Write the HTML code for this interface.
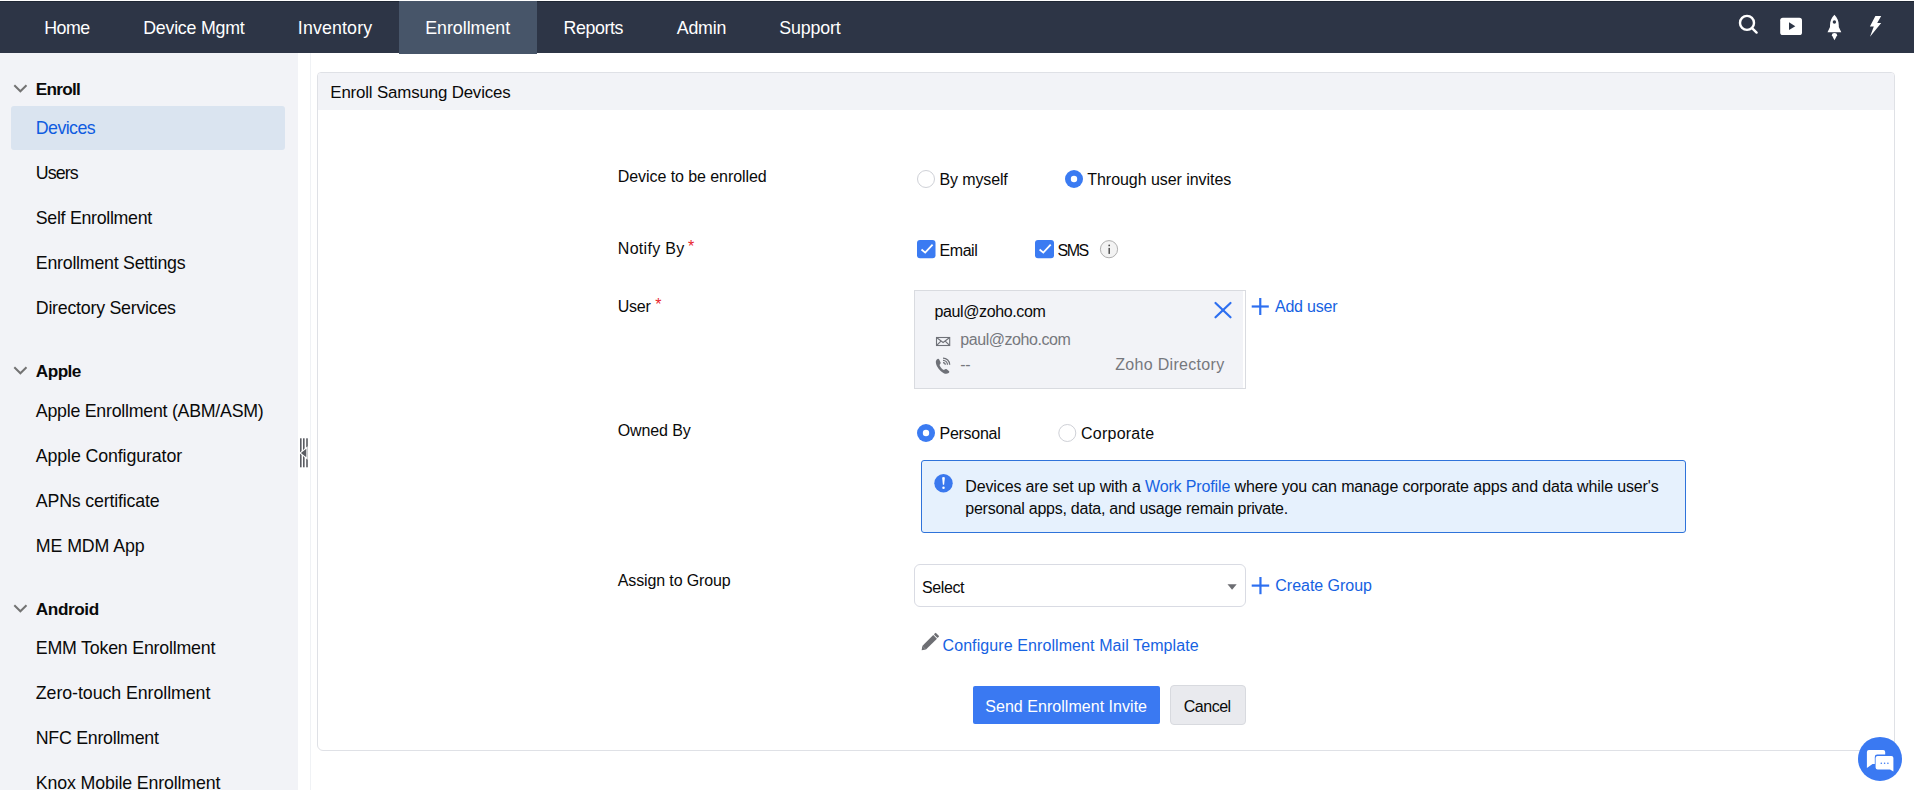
<!DOCTYPE html>
<html><head><meta charset="utf-8">
<style>
html,body{margin:0;padding:0;}
body{width:1914px;height:790px;overflow:hidden;position:relative;background:#fff;font-family:"Liberation Sans",sans-serif;}
.a{position:absolute;box-sizing:border-box;}
.t{position:absolute;white-space:nowrap;}
svg{position:absolute;overflow:visible;}
</style></head><body>
<!-- nav -->
<div class="a" style="left:0;top:1px;width:1914px;height:52px;background:#2d3546"></div>
<div class="a" style="left:0;top:1px;width:1914px;height:1px;background:#1f2734"></div>
<div class="a" style="left:399px;top:1px;width:138px;height:53px;background:#475569"></div>
<!-- sidebar -->
<div class="a" style="left:0;top:53px;width:298px;height:737px;background:#f2f3f7"></div>
<div class="a" style="left:11px;top:106px;width:274px;height:44px;background:#dae4f0;border-radius:3px"></div>
<div class="a" style="left:310px;top:53px;width:1px;height:737px;background:#f0f2f5"></div>
<!-- panel -->
<div class="a" style="left:317px;top:72px;width:1578px;height:679px;border:1px solid #dfe1e6;border-radius:4px 4px 6px 6px;overflow:hidden">
  <div class="a" style="left:0;top:0;width:100%;height:37px;background:#f2f3f7"></div>
</div>
<!-- user card -->
<div class="a" style="left:914px;top:290px;width:332px;height:99px;background:#f2f3f7;border:1px solid #d9dbe0"></div>
<div class="a" style="left:1243px;top:291px;width:2px;height:97px;background:#fff"></div>
<!-- info box -->
<div class="a" style="left:921px;top:460px;width:765px;height:73px;background:#e6f1fd;border:1.5px solid #2f73da;border-radius:3px"></div>
<!-- select -->
<div class="a" style="left:914px;top:564px;width:332px;height:43px;background:#fff;border:1px solid #d9dbe3;border-radius:6px"></div>
<!-- buttons -->
<div class="a" style="left:973px;top:686px;width:187px;height:38px;background:#3a79f2;border-radius:2px"></div>
<div class="a" style="left:1170px;top:685px;width:76px;height:40px;background:#e9eaee;border:1px solid #d8dadf;border-radius:4px"></div>
<!-- ICONS -->
<svg width="1914" height="790" style="left:0;top:0">
  <!-- chevrons -->
  <g fill="none" stroke="#737373" stroke-width="2">
    <polyline points="14.3,85.3 20.4,91.3 26.5,85.3"/>
    <polyline points="14.3,367.3 20.4,373.3 26.5,367.3"/>
    <polyline points="14.3,605.3 20.4,611.3 26.5,605.3"/>
  </g>
  <!-- collapse handle -->
  <g fill="#5a5c62">
    <rect x="300" y="438.3" width="1.6" height="29"/>
    <rect x="303" y="438.3" width="1.6" height="29"/>
    <rect x="306.2" y="438.3" width="1.6" height="29"/>
    <polygon points="299.3,453 307.6,446.2 307.6,459.8" fill="#fff"/>
    <polygon points="300.9,452.9 306.3,448.7 306.3,457.2"/>
  </g>
  <!-- nav icons -->
  <g fill="none" stroke="#fff" stroke-width="2.4" stroke-linecap="round">
    <circle cx="1747" cy="22.9" r="7"/>
    <line x1="1752.3" y1="28.3" x2="1756.6" y2="32.6"/>
  </g>
  <rect x="1780.2" y="17.7" width="21.8" height="17.3" rx="2.6" fill="#fff"/>
  <polygon points="1789,22.3 1789,30 1795.3,26.15" fill="#2d3546"/>
  <path d="M1834.4,14.7 C1837.2,17.5 1838.8,21 1838.8,25.5 L1838.8,27 L1841.3,32.2 L1827.5,32.2 L1830,27 L1830,25.5 C1830,21 1831.6,17.5 1834.4,14.7 Z" fill="#fff"/>
  <circle cx="1834.4" cy="22" r="1.7" fill="#2d3546"/>
  <path d="M1831.9,35.2 C1831.9,33.8 1833,33.1 1834.5,33.1 C1836,33.1 1837.1,33.8 1837.1,35.2 L1834.5,40.2 Z" fill="#fff"/>
  <polygon points="1875.4,16 1881.2,16 1877.2,22.9 1881.2,22.9 1870,36.8 1873.8,26.6 1869.9,26.6" fill="#fff"/>
  <!-- radios -->
  <circle cx="926" cy="179" r="8.5" fill="#fff" stroke="#cfd1d7" stroke-width="1"/>
  <circle cx="1074" cy="179" r="9" fill="#3b7bf2"/>
  <circle cx="1074" cy="179" r="3.2" fill="#fff"/>
  <circle cx="926" cy="433" r="9" fill="#3b7bf2"/>
  <circle cx="926" cy="433" r="3.2" fill="#fff"/>
  <circle cx="1067.3" cy="433" r="8.5" fill="#fff" stroke="#cfd1d7" stroke-width="1"/>
  <!-- checkboxes -->
  <rect x="917" y="240" width="18.5" height="18.2" rx="3" fill="#3b7bf2"/>
  <polyline points="921.5,249.5 925.2,252.6 932.6,244.6" fill="none" stroke="#fff" stroke-width="1.8"/>
  <rect x="1035" y="240" width="19" height="18.2" rx="3" fill="#3b7bf2"/>
  <polyline points="1039.6,249.5 1043.3,252.6 1050.7,244.6" fill="none" stroke="#fff" stroke-width="1.8"/>
  <!-- info i -->
  <circle cx="1109" cy="249.2" r="8.6" fill="#f3f3f3" stroke="#b0b0b0" stroke-width="1"/>
  <circle cx="1109.2" cy="245.4" r="0.85" fill="#444"/>
  <rect x="1108.5" y="247.9" width="1.4" height="6" fill="#444"/>
  <!-- asterisks -->
  <text x="688" y="251.9" font-family="Liberation Sans" font-size="16" fill="#e8262c">*</text>
  <text x="655.2" y="309.7" font-family="Liberation Sans" font-size="16" fill="#e8262c">*</text>
  <!-- X close -->
  <g stroke="#2d6ff0" stroke-width="2.2" fill="none" stroke-linecap="round">
    <line x1="1215.5" y1="303" x2="1230.5" y2="317.3"/>
    <line x1="1230.5" y1="303" x2="1215.5" y2="317.3"/>
  </g>
  <!-- plus icons -->
  <g stroke="#2d6ff0" stroke-width="2.2" fill="none">
    <line x1="1251.7" y1="306.5" x2="1268.8" y2="306.5"/>
    <line x1="1260.25" y1="298" x2="1260.25" y2="315"/>
    <line x1="1251.7" y1="585.6" x2="1269.2" y2="585.6"/>
    <line x1="1260.45" y1="577" x2="1260.45" y2="594.2"/>
  </g>
  <!-- envelope -->
  <g stroke="#6f7178" stroke-width="1.1" fill="none">
    <rect x="936.5" y="337.5" width="13.2" height="8"/>
    <polyline points="936.5,337.5 943.1,342.5 949.7,337.5"/>
    <line x1="936.5" y1="345.5" x2="941" y2="341.2"/>
    <line x1="949.7" y1="345.5" x2="945.2" y2="341.2"/>
  </g>
  <!-- phone -->
  <path d="M937.6,359 C936.4,359.6 935.6,361 935.9,363 C936.6,366.8 939.8,371 943.8,373.2 C945.5,374.1 947.3,373.9 948.6,373 C949.4,372.4 949.6,371.5 948.9,370.9 L946.7,369.2 C946,368.7 945.2,368.8 944.6,369.4 L943.9,370 C942,369.1 940.2,366.9 939.5,364.9 L940.2,364.1 C940.8,363.5 940.8,362.7 940.4,362 L939.2,359.5 C938.8,358.8 938.2,358.7 937.6,359 Z" fill="#6f7178"/>
  <g stroke="#6f7178" stroke-width="1.25" fill="none">
    <path d="M943,362.5 A2.3,2.3 0 0 1 945.3,364.8"/>
    <path d="M943,360.3 A4.5,4.5 0 0 1 947.5,364.8"/>
    <path d="M943,358.1 A6.7,6.7 0 0 1 949.7,364.8"/>
  </g>
  <!-- exclamation -->
  <circle cx="943.5" cy="483.2" r="9.2" fill="#3a78ee"/>
  <path d="M942.1,477.4 Q943.5,476.6 944.9,477.4 L944.1,484.8 L942.9,484.8 Z" fill="#fff"/>
  <circle cx="943.5" cy="487.7" r="1.25" fill="#fff"/>
  <!-- select caret -->
  <polygon points="1227.5,584.3 1236.7,584.3 1232.1,589.7" fill="#6c6d72"/>
  <!-- pencil -->
  <g transform="translate(930.5,641.4) rotate(-45)">
    <rect x="-9" y="-2.6" width="15.5" height="5.2" fill="#6d6e73"/>
    <rect x="7.3" y="-2.6" width="2.6" height="5.2" rx="0.8" fill="#6d6e73"/>
    <polygon points="-9,-2.6 -12.5,0 -9,2.6" fill="#6d6e73"/>
  </g>
  <!-- chat -->
  <circle cx="1880" cy="758.9" r="22" fill="#3a79f2"/>
  <path d="M1868.9,750 L1883.2,750 Q1885.2,750 1885.2,752 L1885.2,764 L1872.5,764 L1866.9,768 L1866.9,752 Q1866.9,750 1868.9,750 Z" fill="#fff"/>
  <path d="M1877.2,754.6 L1891.8,754.6 Q1894.2,754.6 1894.2,757 L1894.2,772.5 L1890.5,770.2 L1877.2,770.2 Q1874.8,770.2 1874.8,767.8 L1874.8,757 Q1874.8,754.6 1877.2,754.6 Z" fill="#3a79f2"/>
  <path d="M1877.6,756 L1891.4,756 Q1893.4,756 1893.4,758 L1893.4,771.6 L1890,769.5 L1877.6,769.5 Q1875.6,769.5 1875.6,767.5 L1875.6,758 Q1875.6,756 1877.6,756 Z" fill="#fff"/>
  <g fill="#3a79f2"><circle cx="1881.3" cy="763.3" r="0.8"/><circle cx="1884.6" cy="763.3" r="0.8"/><circle cx="1887.9" cy="763.3" r="0.8"/></g>
</svg>
<div class="t" style="left:44.20px;top:18px;font-size:17.8px;line-height:20px;color:#ffffff;letter-spacing:-0.475px;">Home</div>
<div class="t" style="left:143.20px;top:18px;font-size:17.8px;line-height:20px;color:#ffffff;letter-spacing:-0.226px;">Device Mgmt</div>
<div class="t" style="left:297.80px;top:18px;font-size:17.8px;line-height:20px;color:#ffffff;letter-spacing:0.144px;">Inventory</div>
<div class="t" style="left:425.20px;top:18px;font-size:17.8px;line-height:20px;color:#ffffff;letter-spacing:-0.009px;">Enrollment</div>
<div class="t" style="left:563.50px;top:18px;font-size:17.8px;line-height:20px;color:#ffffff;letter-spacing:-0.383px;">Reports</div>
<div class="t" style="left:676.70px;top:18px;font-size:17.8px;line-height:20px;color:#ffffff;letter-spacing:-0.166px;">Admin</div>
<div class="t" style="left:779.20px;top:18px;font-size:17.8px;line-height:20px;color:#ffffff;letter-spacing:-0.132px;">Support</div>
<div class="t" style="left:35.80px;top:79px;font-size:17.2px;line-height:20px;color:#0a0a0a;letter-spacing:-0.752px;font-weight:bold;">Enroll</div>
<div class="t" style="left:35.80px;top:118px;font-size:17.8px;line-height:20px;color:#0f5ce0;letter-spacing:-0.563px;">Devices</div>
<div class="t" style="left:35.80px;top:163px;font-size:17.8px;line-height:20px;color:#0a0a0a;letter-spacing:-0.890px;">Users</div>
<div class="t" style="left:35.80px;top:208px;font-size:17.8px;line-height:20px;color:#0a0a0a;letter-spacing:-0.299px;">Self Enrollment</div>
<div class="t" style="left:35.80px;top:253px;font-size:17.8px;line-height:20px;color:#0a0a0a;letter-spacing:-0.240px;">Enrollment Settings</div>
<div class="t" style="left:35.80px;top:298px;font-size:17.8px;line-height:20px;color:#0a0a0a;letter-spacing:-0.238px;">Directory Services</div>
<div class="t" style="left:35.80px;top:361px;font-size:17.2px;line-height:20px;color:#0a0a0a;letter-spacing:-0.529px;font-weight:bold;">Apple</div>
<div class="t" style="left:35.80px;top:401px;font-size:17.8px;line-height:20px;color:#0a0a0a;letter-spacing:-0.249px;">Apple Enrollment (ABM/ASM)</div>
<div class="t" style="left:35.80px;top:446px;font-size:17.8px;line-height:20px;color:#0a0a0a;letter-spacing:-0.115px;">Apple Configurator</div>
<div class="t" style="left:35.80px;top:491px;font-size:17.8px;line-height:20px;color:#0a0a0a;letter-spacing:-0.176px;">APNs certificate</div>
<div class="t" style="left:35.80px;top:536px;font-size:17.8px;line-height:20px;color:#0a0a0a;letter-spacing:-0.092px;">ME MDM App</div>
<div class="t" style="left:35.80px;top:599px;font-size:17.2px;line-height:20px;color:#0a0a0a;letter-spacing:-0.410px;font-weight:bold;">Android</div>
<div class="t" style="left:35.80px;top:638px;font-size:17.8px;line-height:20px;color:#0a0a0a;letter-spacing:-0.205px;">EMM Token Enrollment</div>
<div class="t" style="left:35.80px;top:683px;font-size:17.8px;line-height:20px;color:#0a0a0a;letter-spacing:-0.067px;">Zero-touch Enrollment</div>
<div class="t" style="left:35.80px;top:728px;font-size:17.8px;line-height:20px;color:#0a0a0a;letter-spacing:-0.265px;">NFC Enrollment</div>
<div class="t" style="left:35.80px;top:773px;font-size:17.8px;line-height:20px;color:#0a0a0a;letter-spacing:-0.151px;">Knox Mobile Enrollment</div>
<div class="t" style="left:330.30px;top:83px;font-size:16.9px;line-height:19px;color:#0a0a0a;letter-spacing:-0.173px;">Enroll Samsung Devices</div>
<div class="t" style="left:617.80px;top:168px;font-size:16.0px;line-height:17px;color:#0a0a0a;letter-spacing:-0.071px;">Device to be enrolled</div>
<div class="t" style="left:617.80px;top:240px;font-size:16.0px;line-height:17px;color:#0a0a0a;letter-spacing:0.300px;">Notify By</div>
<div class="t" style="left:617.80px;top:298px;font-size:16.0px;line-height:17px;color:#0a0a0a;letter-spacing:-0.287px;">User</div>
<div class="t" style="left:617.80px;top:422px;font-size:16.0px;line-height:17px;color:#0a0a0a;letter-spacing:-0.120px;">Owned By</div>
<div class="t" style="left:617.80px;top:572px;font-size:16.0px;line-height:17px;color:#0a0a0a;letter-spacing:-0.130px;">Assign to Group</div>
<div class="t" style="left:939.50px;top:171px;font-size:16.0px;line-height:17px;color:#0a0a0a;letter-spacing:-0.133px;">By myself</div>
<div class="t" style="left:1087.30px;top:171px;font-size:16.0px;line-height:17px;color:#0a0a0a;letter-spacing:-0.051px;">Through user invites</div>
<div class="t" style="left:939.50px;top:242px;font-size:16.0px;line-height:17px;color:#0a0a0a;letter-spacing:-0.425px;">Email</div>
<div class="t" style="left:1057.50px;top:242px;font-size:16.0px;line-height:17px;color:#0a0a0a;letter-spacing:-1.470px;">SMS</div>
<div class="t" style="left:939.50px;top:425px;font-size:16.0px;line-height:17px;color:#0a0a0a;letter-spacing:-0.274px;">Personal</div>
<div class="t" style="left:1081.10px;top:425px;font-size:16.0px;line-height:17px;color:#0a0a0a;letter-spacing:0.223px;">Corporate</div>
<div class="t" style="left:934.50px;top:303px;font-size:16.0px;line-height:17px;color:#0a0a0a;letter-spacing:-0.387px;">paul@zoho.com</div>
<div class="t" style="left:960.30px;top:331px;font-size:16.0px;line-height:17px;color:#76787d;letter-spacing:-0.445px;">paul@zoho.com</div>
<div class="t" style="left:960.30px;top:356px;font-size:16.0px;line-height:17px;color:#76787d;letter-spacing:-0.340px;">--</div>
<div class="t" style="left:1115.30px;top:356px;font-size:16.0px;line-height:17px;color:#76787d;letter-spacing:0.303px;">Zoho Directory</div>
<div class="t" style="left:1275.00px;top:298px;font-size:16.0px;line-height:17px;color:#1662e2;letter-spacing:-0.226px;">Add user</div>
<div class="t" style="left:965.30px;top:478px;font-size:16.0px;line-height:17px;color:#0a0a0a;letter-spacing:-0.135px;">Devices are set up with a <span style='color:#1662e2'>Work Profile</span> where you can manage corporate apps and data while user's</div>
<div class="t" style="left:965.30px;top:500px;font-size:16.0px;line-height:17px;color:#0a0a0a;letter-spacing:-0.257px;">personal apps, data, and usage remain private.</div>
<div class="t" style="left:922.00px;top:579px;font-size:16.0px;line-height:17px;color:#0a0a0a;letter-spacing:-0.396px;">Select</div>
<div class="t" style="left:1275.30px;top:577px;font-size:16.0px;line-height:17px;color:#1662e2;letter-spacing:-0.024px;">Create Group</div>
<div class="t" style="left:942.50px;top:637px;font-size:16.0px;line-height:17px;color:#1662e2;letter-spacing:0.091px;">Configure Enrollment Mail Template</div>
<div class="t" style="left:985.30px;top:698px;font-size:16.0px;line-height:17px;color:#ffffff;letter-spacing:0.035px;">Send Enrollment Invite</div>
<div class="t" style="left:1183.70px;top:698px;font-size:16.0px;line-height:17px;color:#0a0a0a;letter-spacing:-0.468px;">Cancel</div>
</body></html>
